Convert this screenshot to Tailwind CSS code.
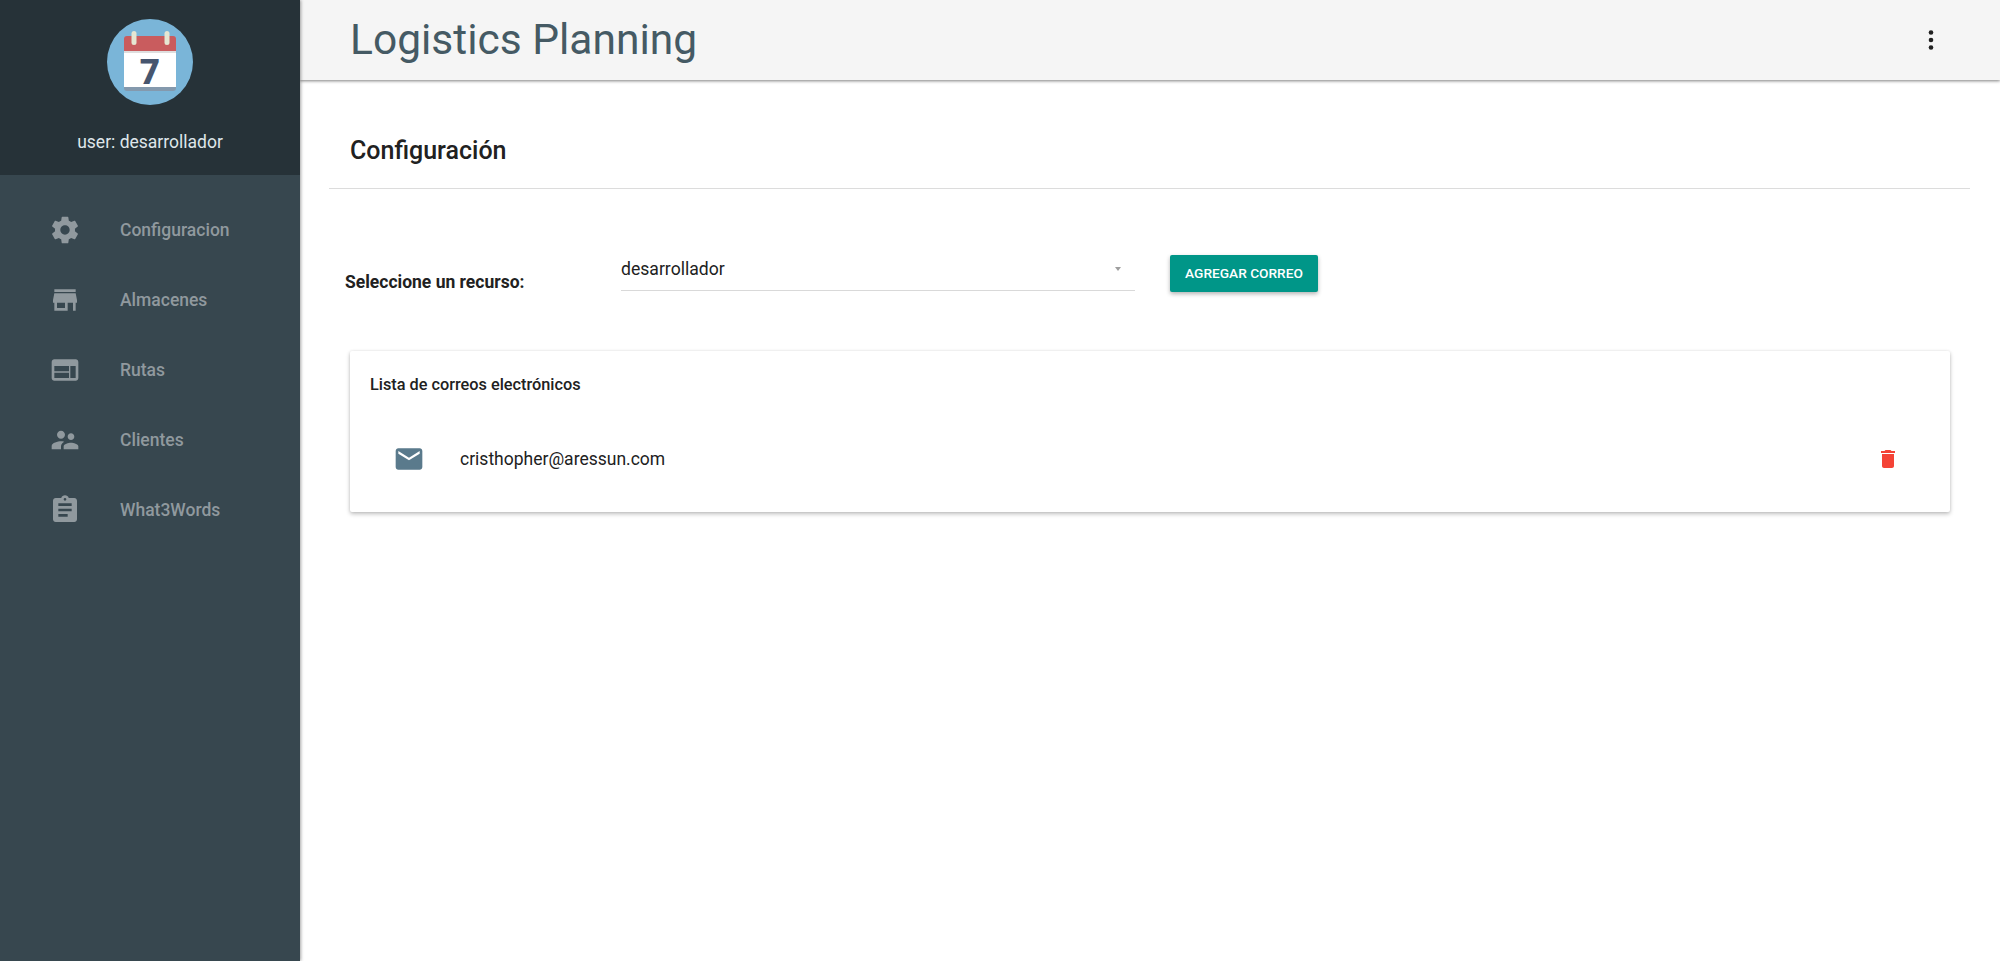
<!DOCTYPE html>
<html>
<head>
<meta charset="utf-8">
<script src="https://cdn.jsdelivr.net/npm/@tailwindcss/browser@4"></script>
</head>
<body class="font-['Roboto',sans-serif] bg-white">
<div class="flex h-[961px] w-[2000px] overflow-hidden">
  <aside class="w-[300px] shrink-0 bg-[#37474f] flex flex-col shadow-[1px_0_3px_rgba(0,0,0,0.35)] z-20">
    <div class="h-[175px] bg-[#263238] flex flex-col items-center pt-[19px]">
      <svg width="86" height="86" viewBox="0 0 86 86">
        <circle cx="43" cy="43" r="43" fill="#7ab5d8"/>
        <path d="M17 20a3 3 0 0 1 3-3h46a3 3 0 0 1 3 3v13H17z" fill="#c95c5e"/>
        <rect x="17" y="32" width="52" height="37" fill="#fff"/>
        <rect x="17" y="32" width="52" height="2" fill="#dedede"/>
        <path d="M17 68h52v1a3 3 0 0 1-3 3H20a3 3 0 0 1-3-3z" fill="#8499ad"/>
        <rect x="24.500" y="12" width="5" height="14" rx="2.500" fill="#e6e6d2"/>
        <rect x="57.500" y="12" width="5" height="14" rx="2.500" fill="#e6e6d2"/>
        <text x="43" y="65" text-anchor="middle" font-family="Roboto" font-weight="900" font-size="35" fill="#47566f">7</text>
      </svg>
      <div class="mt-[27px] text-[#dfe6ea] text-[17.500px] leading-[20px]">user: desarrollador</div>
    </div>
    <nav class="flex flex-col pt-[20px] text-[#90999e] text-[17.500px] font-medium">
      <div class="flex items-center h-[70px] pl-[49px]">
        <svg class="w-[32px] h-[32px] fill-[#90999e]" viewBox="0 0 24 24"><path d="M19.430 12.980c.04-.32.07-.64.07-.98s-.03-.66-.07-.98l2.110-1.650c.19-.15.24-.42.12-.64l-2-3.460c-.12-.22-.39-.3-.61-.22l-2.490 1c-.52-.4-1.080-.73-1.690-.98l-.38-2.650C14.460 2.180 14.250 2 14 2h-4c-.25 0-.46.18-.49.42l-.38 2.650c-.61.25-1.170.59-1.690.98l-2.490-1c-.23-.09-.49 0-.61.22l-2 3.460c-.13.22-.07.49.12.64l2.110 1.650c-.04.32-.07.65-.07.98s.03.66.07.98l-2.110 1.650c-.19.15-.24.42-.12.64l2 3.460c.12.22.39.3.61.22l2.490-1c.52.4 1.080.73 1.690.98l.38 2.650c.03.24.24.42.49.42h4c.25 0 .46-.18.49-.42l.38-2.650c.61-.25 1.170-.59 1.690-.98l2.490 1c.23.09.49 0 .61-.22l2-3.460c.12-.22.07-.49-.12-.64l-2.110-1.650zM12 15.500c-1.930 0-3.500-1.570-3.500-3.500s1.570-3.500 3.500-3.500 3.500 1.570 3.500 3.500-1.570 3.500-3.500 3.500z"/></svg>
        <span class="ml-[39px]">Configuracion</span>
      </div>
      <div class="flex items-center h-[70px] pl-[49px]">
        <svg class="w-[32px] h-[32px] fill-[#90999e]" viewBox="0 0 24 24"><path d="M20 4H4v2h16V4zm1 10v-2l-1-5H4l-1 5v2h1v6h10v-6h4v6h2v-6h1zm-9 4H6v-4h6v4z"/></svg>
        <span class="ml-[39px]">Almacenes</span>
      </div>
      <div class="flex items-center h-[70px] pl-[49px]">
        <svg class="w-[32px] h-[32px] fill-[#90999e]" viewBox="0 0 24 24"><path d="M20 4H4c-1.100 0-1.990.9-1.990 2L2 18c0 1.100.9 2 2 2h16c1.100 0 2-.9 2-2V6c0-1.100-.9-2-2-2zm-5 14H4v-4h11v4zm0-5H4V9h11v4zm5 5h-4V9h4v9z"/></svg>
        <span class="ml-[39px]">Rutas</span>
      </div>
      <div class="flex items-center h-[70px] pl-[49px]">
        <svg class="w-[32px] h-[32px] fill-[#90999e]" viewBox="0 0 24 24"><path d="M16.500 12c1.380 0 2.490-1.120 2.490-2.500S17.880 7 16.500 7 14 8.120 14 9.500s1.120 2.500 2.500 2.500zM9 11c1.660 0 2.990-1.340 2.990-3S10.660 5 9 5 6 6.340 6 8s1.340 3 3 3zm7.500 3c-1.830 0-5.500.92-5.500 2.750V19h11v-2.250c0-1.830-3.670-2.750-5.500-2.750zM9 13c-2.330 0-7 1.170-7 3.500V19h7v-2.250c0-.85.33-2.340 2.370-3.470C10.500 13.100 9.660 13 9 13z"/></svg>
        <span class="ml-[39px]">Clientes</span>
      </div>
      <div class="flex items-center h-[70px] pl-[49px]">
        <svg class="w-[32px] h-[32px] fill-[#90999e]" viewBox="0 0 24 24"><path d="M19 3h-4.180C14.400 1.840 13.300 1 12 1c-1.300 0-2.400.84-2.820 2H5c-1.100 0-2 .9-2 2v14c0 1.100.9 2 2 2h14c1.100 0 2-.9 2-2V5c0-1.100-.9-2-2-2zm-7 0c.55 0 1 .45 1 1s-.45 1-1 1-1-.45-1-1 .45-1 1-1zm2 14H7v-2h7v2zm3-4H7v-2h10v2zm0-4H7V7h10v2z"/></svg>
        <span class="ml-[39px]">What3Words</span>
      </div>
    </nav>
  </aside>
  <main class="flex-1 flex flex-col min-w-0">
    <header class="h-[80px] shrink-0 bg-[#f5f5f5] flex items-center justify-between pl-[50px] pr-[57px] shadow-[0_1px_3px_rgba(0,0,0,0.5)] z-10">
      <h1 class="text-[#455a64] text-[42.500px] leading-none font-normal">Logistics Planning</h1>
      <svg class="w-[24px] h-[24px] fill-[#212121]" viewBox="0 0 24 24"><circle cx="12" cy="4.500" r="2.300"/><circle cx="12" cy="12" r="2.300"/><circle cx="12" cy="19.500" r="2.300"/></svg>
    </header>
    <section class="pl-[29px] pr-[30px]">
      <div class="h-[109px] border-b border-[#dcdcdc] pl-[21px] pt-[59px]">
        <h2 class="text-[25px] font-medium text-[#212121] leading-[24px]">Configuración</h2>
      </div>
    </section>
    <section class="flex items-start pl-[45px] pt-[64px]">
      <label class="w-[276px] mt-[16px] text-[17.500px] leading-[26px] font-bold text-[#212121]">Seleccione un recurso:</label>
      <div class="w-[514px] h-[38px] border-b border-[#d9d9d9] flex items-center justify-between pr-[14px] text-[17.600px] text-[#212121] pb-[5px]">
        <span>desarrollador</span>
        <span class="w-0 h-0 border-x-[3px] border-x-transparent border-t-[4px] border-t-[#9e9e9e]"></span>
      </div>
      <button class="ml-[35px] mt-[2px] w-[148px] h-[37px] bg-[#009688] text-white text-[13.700px] font-medium rounded-[2px] shadow-[0_2px_4px_rgba(0,0,0,0.3)]">AGREGAR CORREO</button>
    </section>
    <section class="ml-[50px] mt-[56px] w-[1600px] h-[161px] bg-white rounded-[2px] shadow-[0_2px_4px_rgba(0,0,0,0.25),0_0_3px_rgba(0,0,0,0.08)] flex flex-col">
      <h3 class="pl-[20px] pt-[24px] text-[16.300px] font-medium text-[#212121] leading-[20px]">Lista de correos electrónicos</h3>
      <div class="flex items-center mt-[39px] h-[50px]">
        <svg class="ml-[43px] w-[32px] h-[32px] fill-[#5a7a8c] shrink-0" viewBox="0 0 24 24"><path d="M20 4H4c-1.100 0-1.990.9-1.990 2L2 18c0 1.100.9 2 2 2h16c1.100 0 2-.9 2-2V6c0-1.100-.9-2-2-2zm0 4l-8 5-8-5V6l8 5 8-5v2z"/></svg>
        <span class="ml-[35px] text-[17.500px] text-[#212121]">cristhopher@aressun.com</span>
        <svg class="ml-auto mr-[50px] w-[24px] h-[24px] fill-[#f44336] shrink-0" viewBox="0 0 24 24"><path d="M6 19c0 1.100.9 2 2 2h8c1.100 0 2-.9 2-2V7H6v12zM19 4h-3.500l-1-1h-5l-1 1H5v2h14V4z"/></svg>
      </div>
    </section>
  </main>
</div>
</body>
</html>
